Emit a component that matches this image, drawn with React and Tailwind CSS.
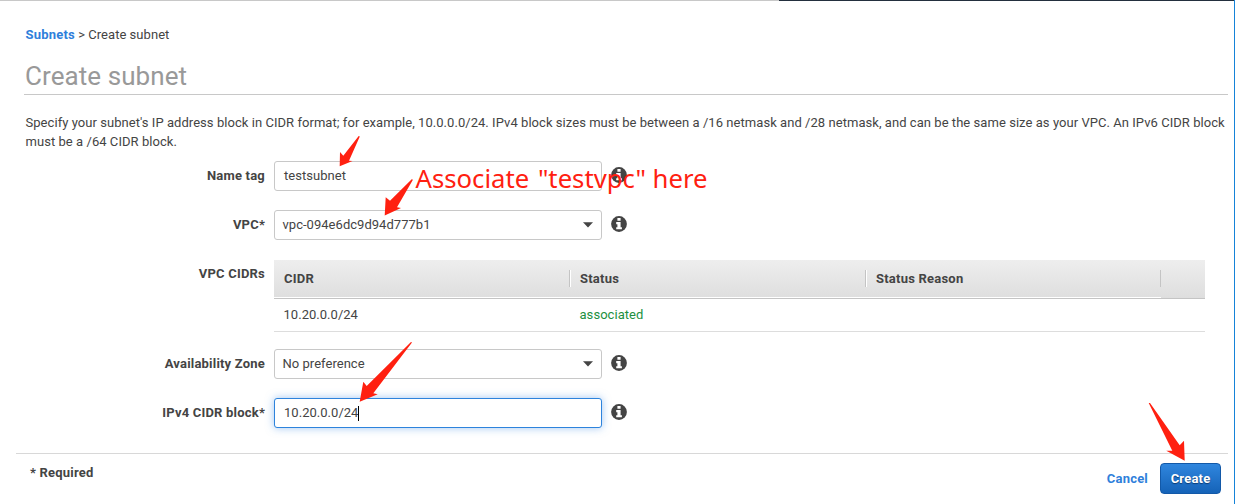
import React from "react";

function InfoIcon() {
  return (
    <svg className="-mt-[2px] ml-[9px] h-4 w-4 shrink-0" viewBox="0 0 16 16">
      <circle cx="8" cy="8" r="7.9" fill="#444" />
      <path d="M6.4 2h3.2v2.7H6.4zM5.2 6.1h4.4v5.1h1.3v2.1H5.2v-2.1h1.2V8.2H5.2z" fill="#fff" />
    </svg>
  );
}

function Label({ children }) {
  return (
    <div className="w-[265px] shrink-0 text-right text-[13px] font-bold leading-[30px] tracking-[0.2px]">
      {children}
    </div>
  );
}

function Field({ label, value, select, focused }) {
  return (
    <div className="mb-[19px] flex h-[30px] items-center">
      <Label>{label}</Label>
      <div
        className={
          "ml-[9px] flex h-[30px] w-[328px] items-center justify-between rounded-[3px] border bg-white pr-[8px] " +
          (select ? "pl-[7.5px] " : "pl-[9px] ") +
          (focused
            ? "border-[#2d83dc] shadow-[0_0_8px_rgba(80,150,230,0.55)]"
            : "border-[#c8c8c8]")
        }
      >
        <span className="flex items-center tracking-[0.03px]">
          {value}
          {focused && <span className="h-[15px] w-px bg-black" />}
        </span>
        {select && (
          <svg className="h-[6px] w-[10px]" viewBox="0 0 10 6">
            <path d="M0 0.2h10L5 5.6z" fill="#444" />
          </svg>
        )}
      </div>
      <InfoIcon />
    </div>
  );
}

function HeaderCell({ children }) {
  return (
    <div className="flex w-[296px] items-center justify-between border-b border-white pl-[10px]">
      <span>{children}</span>
      <span className="-mr-px h-[17px] w-[2px] border-l border-r border-l-[#c4c4c4] border-r-white" />
    </div>
  );
}

export default function App() {
  return (
    <div className="relative h-[504px] w-[1235px] overflow-hidden border-r border-[#1583d8] bg-white font-['Roboto',sans-serif] text-[13px] text-[#444]">
      <div className="flex h-px">
        <div className="w-[779px] bg-[#c8c8c8]" />
        <div className="flex-1 bg-[#232f3e]" />
      </div>

      <header className="ml-[24px] mr-[6px] h-[94px] border-b border-[#c8c8c8] pl-px pt-[24px]">
        <nav className="h-[19px] pl-[0.5px] leading-[19px] tracking-[0.04px]">
          <a className="font-bold tracking-[0.2px] text-[#2f7fdb]">Subnets</a> &gt; Create subnet
        </nav>
        <h1 className="mt-[17px] text-[26px] leading-[30px] tracking-[0.07px] text-[#999]">Create subnet</h1>
      </header>

      <p className="ml-[25.5px] mt-[18px] whitespace-nowrap leading-[19px] tracking-[0.05px]">
        Specify your subnet's IP address block in CIDR format; for example, 10.0.0.0/24. IPv4 block sizes must be
        between a /16 netmask and /28 netmask, and can be the same size as your VPC. An IPv6 CIDR block
        <br />
        must be a /64 CIDR block.
      </p>

      <main className="mt-[10px]">
        <Field label="Name tag" value="testsubnet" />
        <Field label="VPC*" value="vpc-094e6dc9d94d777b1" select />
        <div className="mb-[17px] mt-[20px] flex">
          <div className="-mt-px">
            <Label>VPC CIDRs</Label>
          </div>
          <div className="ml-[9px] w-[931px]">
            <div className="flex h-[39px] border-b border-[#c4c4c4] bg-linear-to-b from-[#eee] to-[#dedede] font-bold tracking-[0.22px]">
              <HeaderCell>CIDR</HeaderCell>
              <HeaderCell>Status</HeaderCell>
              <div className="flex w-[295px] items-center justify-between border-b border-white pl-[10px]">
                <span>Status Reason</span>
                <span className="h-[17px] w-px bg-[#c4c4c4]" />
              </div>
            </div>
            <div className="flex h-[33px] items-center border-b border-[#ddd] tracking-[0.03px]">
              <span className="w-[296px] pl-[9.5px]">10.20.0.0/24</span>
              <span className="w-[296px] pl-[9.5px] tracking-[0.05px] text-[#1d9040]">associated</span>
            </div>
          </div>
        </div>
        <Field label="Availability Zone" value="No preference" select />
        <Field label="IPv4 CIDR block*" value="10.20.0.0/24" focused />
      </main>

      <footer className="ml-[16px] mr-[6px] mt-[25px] flex h-[51px] items-start justify-between border-t border-[#d8d8d8] pl-[14px] pr-[7px] font-bold tracking-[0.2px]">
        <span className="mt-[9px] leading-[19px]">* Required</span>
        <div className="mt-[9px] flex items-center">
          <a className="mr-[12px] text-[#2f7fdb]">Cancel</a>
          <button className="h-[31px] w-[61px] rounded-[4px] border border-[#1359a8] bg-linear-to-b from-[#2f86de] to-[#1563b8] font-bold tracking-[0.2px] text-white [text-shadow:0_1px_1px_#0b3c75]">
            Create
          </button>
        </div>
      </footer>

      <svg className="absolute left-0 top-0 h-[504px] w-[1235px]" viewBox="0 0 1235 504" fill="#ff2010">
        <path d="M339.7 166.3L340 152L343.3 155.7L358.7 136L359.8 136.6L349 160.7L352.5 161Z" />
        <path d="M384.7 215.5L385.7 197.3L390 200.7L412 179L412.8 180L397 207.3L401 208Z" />
        <path d="M359.7 401.7L363.3 381.7L366.7 386L411 342L412 342.6L373.3 393.3L377.7 394.3Z" />
        <path d="M1184.7 460.7L1184 440.7L1179.7 445.3L1150 403L1148.7 403L1172.3 450.7L1166.3 450.7Z" />
      </svg>
      <div className="absolute left-[415.5px] top-[161px] whitespace-nowrap font-['Noto_Sans',sans-serif] text-[25.7px] leading-[36px] text-[#ff2010]">
        Associate <span className="ml-[2px]">"testvpc"</span> here
      </div>
    </div>
  );
}
